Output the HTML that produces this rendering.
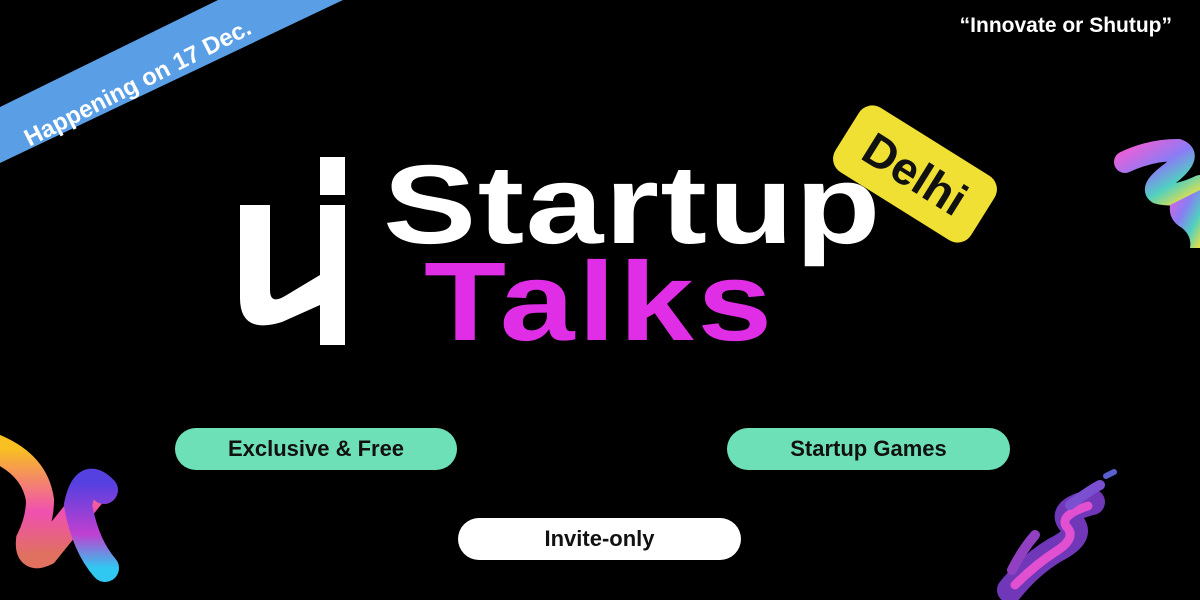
<!DOCTYPE html>
<html><head><meta charset="utf-8"><style>
html,body{margin:0;padding:0;background:#000;}
#c{position:relative;width:1200px;height:600px;overflow:hidden;background:#000;font-family:"Liberation Sans",sans-serif;}
.t{position:absolute;font-weight:bold;white-space:nowrap;}
.pill{position:absolute;height:42px;border-radius:21px;font-weight:bold;font-size:22px;color:#111;display:flex;align-items:center;justify-content:center;}
</style></head><body><div id="c">
<svg width="1200" height="600" style="position:absolute;left:0;top:0">
<defs>
<linearGradient id="g1" x1="0" y1="0" x2="1" y2="1"><stop offset="0" stop-color="#e860d8"/><stop offset=".4" stop-color="#8a7cf5"/><stop offset=".7" stop-color="#50d0c0"/><stop offset="1" stop-color="#f0e040"/></linearGradient>
<linearGradient id="g2" x1="0" y1="0" x2="0" y2="1"><stop offset="0" stop-color="#f8c020"/><stop offset=".6" stop-color="#f050b0"/><stop offset="1" stop-color="#e07060"/></linearGradient>
<linearGradient id="g3" x1="0" y1="0" x2="0" y2="1"><stop offset="0" stop-color="#5540e0"/><stop offset=".6" stop-color="#c040d0"/><stop offset="1" stop-color="#30c8f0"/></linearGradient>
</defs>
<polygon points="0,107 218,0 343,0 0,163" fill="#5a9fe6"/>
<path d="M1125 162 Q1150 150 1178 150 Q1192 155 1172 172 Q1150 188 1158 193 Q1175 198 1200 186" stroke="url(#g1)" stroke-width="22" fill="none" stroke-linecap="round"/>
<path d="M1170 205 Q1168 220 1182 228 Q1192 236 1190 248 L1200 248 L1200 190 Z" fill="url(#g1)"/>
<path d="M-5 448 Q35 465 40 500 Q40 520 30 540 Q28 560 45 552 L95 490" stroke="url(#g2)" stroke-width="28" fill="none" stroke-linecap="round"/>
<path d="M104 490 Q85 470 78 505 Q85 545 105 568" stroke="url(#g3)" stroke-width="28" fill="none" stroke-linecap="round"/>
<g fill="none" stroke-linecap="round">
<path d="M1010 590 Q1030 565 1055 550 Q1085 535 1070 522 Q1060 510 1092 502" stroke="#7038b8" stroke-width="26"/>
<path d="M1015 585 Q1035 565 1055 552 Q1078 538 1066 526 Q1060 515 1088 506" stroke="#e050d0" stroke-width="9"/>
<path d="M1035 535 Q1022 550 1012 570" stroke="#9040c0" stroke-width="10"/>
<path d="M1070 505 Q1090 490 1100 485" stroke="#7a50d0" stroke-width="10"/>
<path d="M1106 476 L1114 472" stroke="#5a60d0" stroke-width="6"/>
</g>
<path d="M320 157 H345 V195 H320 Z" fill="#fff"/>
<path d="M240 205 H270 V290 Q270 305 285 296 L320 275 V205 H345 V345 H320 V305 L282 322 Q240 335 240 298 Z" fill="#fff"/>
</svg>
<div class="t" style="font-size:24px;color:#fff;transform:rotate(-27deg);transform-origin:0 0;left:20px;top:128px">Happening on 17 Dec.</div>
<div class="t" style="right:28px;top:14px;font-size:21px;color:#fff;">“Innovate or Shutup”</div>
<div class="t" style="left:383px;top:149px;font-size:112px;line-height:1;color:#fff;letter-spacing:1px;transform:scaleX(1.25);transform-origin:0 0">Startup</div>
<div class="t" style="left:424px;top:246px;font-size:112px;line-height:1;color:#e02ee6;letter-spacing:3px;transform:scaleX(1.2);transform-origin:0 0">Talks</div>
<div style="position:absolute;left:835px;top:136px;width:160px;height:76px;background:#f0e033;border-radius:16px;transform:rotate(32deg);display:flex;align-items:center;justify-content:center;font-weight:bold;font-size:46px;color:#111;">Delhi</div>
<div class="pill" style="left:175px;top:428px;width:282px;background:#6ee0b8">Exclusive &amp; Free</div>
<div class="pill" style="left:727px;top:428px;width:283px;background:#6ee0b8">Startup Games</div>
<div class="pill" style="left:458px;top:518px;width:283px;background:#fff">Invite-only</div>
</div></body></html>
